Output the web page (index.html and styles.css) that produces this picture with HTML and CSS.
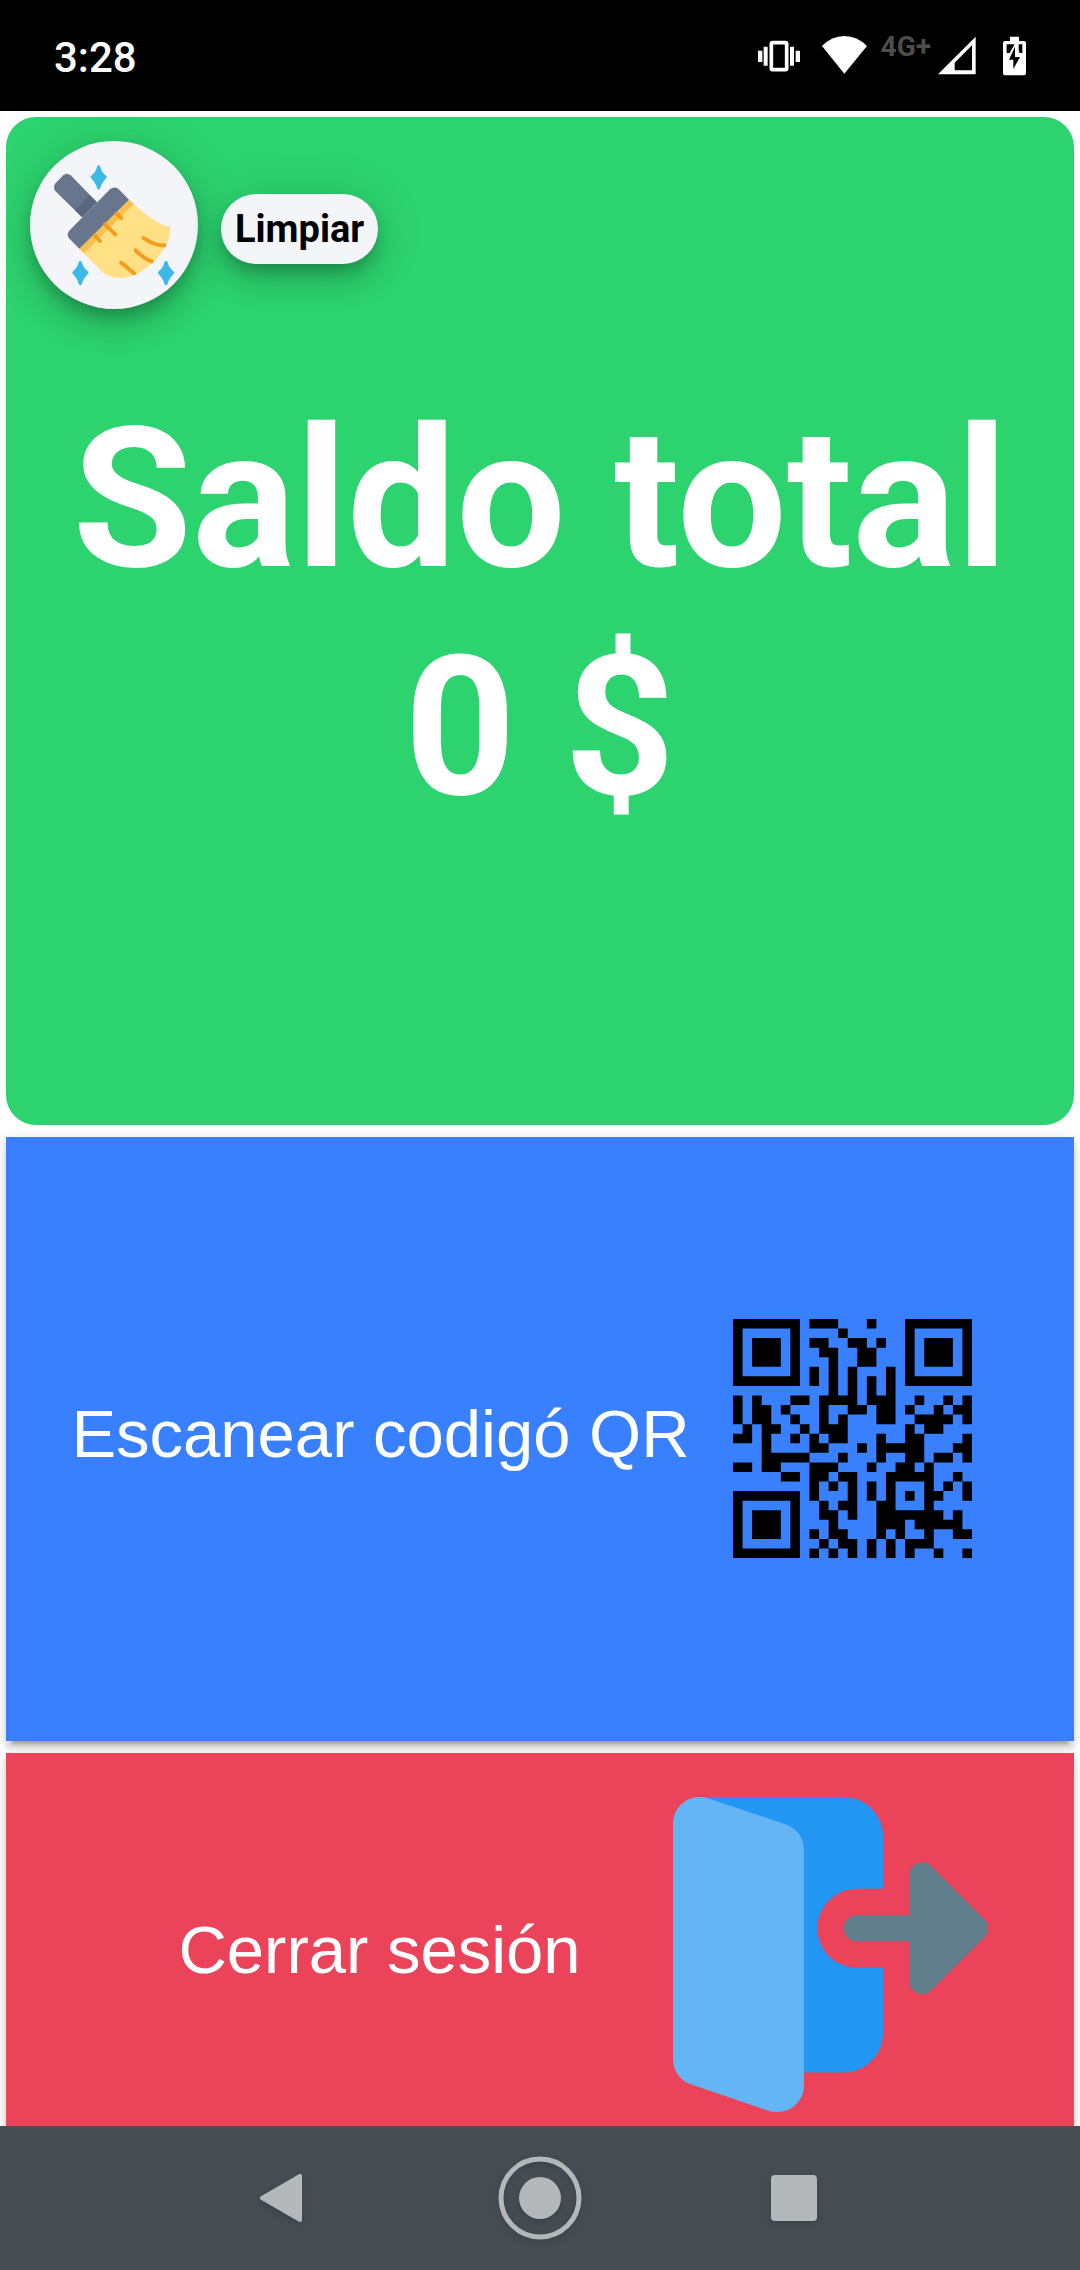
FILE: index.html
```html
<!DOCTYPE html>
<html lang="es">
<head>
<meta charset="utf-8">
<meta name="viewport" content="width=device-width, initial-scale=1">
<title>Saldo total</title>
<link rel="stylesheet" href="styles.css">
</head>
<body>
<header class="status">
  <time class="status-time">3:28</time>
  <div class="status-icons">
    <svg class="icon-vibrate" viewBox="53 106 126 120" aria-hidden="true">
      <path fill="#fff" d="M53 150h13v34H53zM70 138h12v57H70zM149 138h12v57h-12zM166 150h13v34h-13z"/>
      <rect x="93" y="126" width="46" height="81" rx="4" fill="none" stroke="#fff" stroke-width="11"/>
    </svg>
    <svg class="icon-wifi" viewBox="246 106 135 120" aria-hidden="true">
      <path fill="#fff" d="M246 136Q275 106 313 106T381 136L313 219Z"/>
    </svg>
    <span class="network">4G+</span>
    <svg class="icon-signal" viewBox="594 106 114 120" aria-hidden="true">
      <path fill="#fff" fill-rule="evenodd" d="M594 221L707 108V221ZM644 186V209H696V134Z"/>
    </svg>
    <svg class="icon-battery" viewBox="789 106 69 120" aria-hidden="true">
      <path fill="#fff" d="M810 108h27v13h15q6 0 6 6v91q0 6-6 6h-57q-6 0-6-6v-91q0-6 6-6h15z"/>
      <path fill="#000" d="M800 131h24L809 157H800zM836 131h11v26h-8l-3-8zM825 138V169H840L820 205V177H807Z"/>
    </svg>
  </div>
</header>

<main class="content">
  <section class="card">
    <div class="tools">
      <button class="fab" type="button" aria-labelledby="clean-label">
        <svg class="fab-icon" viewBox="90 423 504 504" aria-hidden="true">
          <path fill="#68768d" d="M165 551L190 526Q201 517 212 526L291 607L246 652L165 572Q159 561 165 551Z"/>
          <path fill="#596680" d="M268 585L291 607L246 652L225 630Z"/>
          <path fill="#ffe085" d="M387 599Q455 662 490 675Q503 679 510 679Q516 732 462 783Q420 826 375 833Q334 837 308 817L238 746Z"/>
          <path fill="#f8c14f" d="M387 599L401 612L253 760L238 746Z"/>
          <path fill="#68768d" d="M330 568Q345 556 358 569L387 599L238 746L207 715Q199 704 207 693Z"/>
          <g fill="none" stroke="#f59c1f" stroke-width="12" stroke-linecap="round">
            <path d="M350 641L364 654M315 673L346 703M284 706L300 723M364 788L402 820M407 751Q434 778 455 784M431 714Q464 738 493 736"/>
          </g>
          <path id="spark" fill="#3db9e8" d="M291 500Q296 490 301 500Q304 516 319 528Q322 531 319 534Q304 550 301 564Q296 574 291 564Q288 550 273 534Q270 531 273 528Q288 516 291 500Z"/>
          <use href="#spark" x="-55" y="287"/>
          <use href="#spark" x="202" y="287"/>
        </svg>
      </button>
      <span class="chip" id="clean-label">Limpiar</span>
    </div>
    <h1 class="total">Saldo total<br>0 $</h1>
  </section>

  <button class="action action-scan" type="button">
    <span class="label">Escanear codigó QR</span>
    <svg class="qr" viewBox="0 0 25 25" aria-hidden="true">
      <path fill="none" stroke="#000" d="M0 .5h7m1 0h3m3 0h1m3 0h7
        M0 1.5h1m5 0h1m4 0h1m6 0h1m5 0h1
        M0 2.5h1m1 0h3m1 0h1m1 0h2m2 0h2m1 0h1m2 0h1m1 0h3m1 0h1
        M0 3.5h1m1 0h3m1 0h1m2 0h2m2 0h2m3 0h1m1 0h3m1 0h1
        M0 4.5h1m1 0h3m1 0h1m3 0h1m2 0h2m3 0h1m1 0h3m1 0h1
        M0 5.5h1m5 0h1m1 0h1m1 0h1m1 0h1m3 0h1m1 0h1m5 0h1
        M0 6.5h7m1 0h1m1 0h1m1 0h1m1 0h1m1 0h1m1 0h7
        M10 7.5h1m1 0h1m1 0h1m1 0h1
        M0 8.5h1m1 0h1m3 0h2m1 0h4m1 0h3m2 0h1m2 0h1m1 0h1
        M0 9.5h1m1 0h2m1 0h1m3 0h1m2 0h2m1 0h2m1 0h1m2 0h1m1 0h2
        M0 10.5h1m1 0h2m2 0h1m2 0h1m1 0h1m3 0h2m2 0h4m1 0h1
        M1 11.5h1m1 0h2m2 0h1m1 0h3m6 0h1m1 0h2
        M0 12.5h2m1 0h1m2 0h1m1 0h1m1 0h2m3 0h1m2 0h2m4 0h1
        M3 13.5h1m4 0h2m3 0h1m1 0h5m3 0h2
        M3 14.5h5m3 0h1m3 0h1m2 0h2m1 0h2m1 0h1
        M0 15.5h2m1 0h2m3 0h3m3 0h1m2 0h2m1 0h1
        M5 16.5h2m1 0h2m1 0h2m3 0h5m2 0h1
        M8 17.5h1m1 0h1m1 0h1m1 0h1m1 0h1m3 0h1m1 0h1m1 0h1
        M0 18.5h7m1 0h1m3 0h1m1 0h1m1 0h1m1 0h1m1 0h2m2 0h1
        M0 19.5h1m5 0h1m2 0h1m1 0h2m2 0h2m3 0h1
        M0 20.5h1m1 0h3m1 0h1m2 0h2m1 0h1m2 0h7m1 0h1
        M0 21.5h1m1 0h3m1 0h1m3 0h1m4 0h3m1 0h5
        M0 22.5h1m1 0h3m1 0h1m1 0h1m1 0h2m3 0h1m1 0h1m2 0h1m2 0h2
        M0 23.5h1m5 0h1m2 0h1m1 0h2m1 0h1m1 0h1m1 0h3
        M0 24.5h7m1 0h1m1 0h1m1 0h1m1 0h1m1 0h1m1 0h1m2 0h1m2 0h1"/>
    </svg>
  </button>

  <button class="action action-logout" type="button">
    <span class="label">Cerrar sesión</span>
    <svg class="door" viewBox="101 205 943 943" aria-hidden="true">
      <path fill="#2196f3" d="M180 205H612A118 118 0 0 1 730 323V480H651A118 118 0 0 0 651 716H730V912A118 118 0 0 1 612 1030H480V400Z"/>
      <path fill="#64b5f6" d="M101 284A79 79 0 0 1 180 205Q194 205 205 209L440 287A79 79 0 0 1 493 361V1069A79 79 0 0 1 414 1148Q400 1148 387 1144L154 1065A79 79 0 0 1 101 991Z"/>
      <path fill="#607d8b" d="M651 559H808V441A39 39 0 0 1 875 413L1032 570A39 39 0 0 1 1032 626L875 783A39 39 0 0 1 808 755V637H651A39 39 0 0 1 651 559Z"/>
    </svg>
  </button>
</main>

<nav class="navbar" aria-label="Sistema">
  <button class="nav-button" type="button" aria-label="Atrás">
    <svg class="nav-icon" viewBox="0 0 84 84" aria-hidden="true"><path fill="#b4b8b9" stroke="#b4b8b9" stroke-width="4" stroke-linejoin="round" d="M57 20V64L19 42Z"/></svg>
  </button>
  <button class="nav-button" type="button" aria-label="Inicio">
    <svg class="nav-icon" viewBox="0 0 84 84" aria-hidden="true"><circle cx="42" cy="42" r="39" fill="none" stroke="#b4b8b9" stroke-width="5"/><circle cx="42" cy="42" r="21" fill="#b4b8b9"/></svg>
  </button>
  <button class="nav-button" type="button" aria-label="Recientes">
    <svg class="nav-icon" viewBox="0 0 84 84" aria-hidden="true"><rect x="18" y="19" width="46" height="46" rx="4" fill="#b4b8b9"/></svg>
  </button>
</nav>
</body>
</html>
```
FILE: styles.css
```css
* {
  box-sizing: border-box;
}

body {
  margin: 0;
  height: 100vh;
  display: flex;
  flex-direction: column;
  background: #fff;
  font-family: Roboto, sans-serif;
}

button {
  border: 0;
  padding: 0;
  font: inherit;
  cursor: pointer;
}

svg {
  display: block;
  flex: none;
}

/* System status bar */
.status {
  position: relative;
  z-index: 1;
  flex: none;
  height: 111px;
  padding: 0 54px;
  display: flex;
  align-items: center;
  justify-content: space-between;
  background: #000;
  color: #fff;
}

.status-time {
  padding-top: 5px;
  font-size: 42px;
  font-weight: 500;
  line-height: 48px;
}

.status-icons {
  display: flex;
  align-items: flex-start;
}

.status-icons svg {
  height: 40px;
}

.icon-vibrate {
  width: 42px;
  margin-right: 22px;
}

.icon-wifi {
  width: 45px;
  margin-right: 14px;
}

.network {
  margin-right: 7px;
  color: #4d4d4d;
  font-size: 28px;
  font-weight: 700;
  line-height: 22px;
}

.icon-signal {
  width: 38px;
  margin-right: 27px;
}

.icon-battery {
  width: 23px;
}

/* Scrolling page */
.content {
  flex: 1;
  min-height: 0;
  padding: 6px;
  display: flex;
  flex-direction: column;
  gap: 12px;
  overflow-y: auto;
  scrollbar-width: none;
}

.card {
  flex: none;
  height: calc(50% + 6px);
  padding: 24px;
  border-radius: 30px;
  background: #2dd36f;
}

.tools {
  display: flex;
  align-items: center;
  gap: 23px;
}

.fab {
  width: 168px;
  height: 168px;
  border-radius: 50%;
}

.fab,
.chip {
  background: #f4f5f8;
  box-shadow:
    0 9px 15px -3px rgba(0, 0, 0, .2),
    0 18px 30px rgba(0, 0, 0, .14),
    0 3px 54px rgba(0, 0, 0, .12);
}

.fab-icon {
  width: 168px;
  height: 168px;
}

.chip {
  height: 70px;
  margin-top: 8px;
  padding: 0 14px;
  border-radius: 35px;
  color: #000;
  font-size: 38px;
  font-weight: 700;
  line-height: 70px;
}

.total {
  margin: 77px 0 0;
  color: #fff;
  font-size: 194px;
  font-weight: 700;
  line-height: 228px;
  text-align: center;
  white-space: nowrap;
}

.action {
  flex: none;
  display: flex;
  align-items: center;
  color: #fff;
  font-family: "Liberation Sans", Arial, sans-serif;
  font-size: 67px;
  box-shadow:
    0 9px 3px -6px rgba(0, 0, 0, .2),
    0 6px 6px rgba(0, 0, 0, .14),
    0 3px 15px rgba(0, 0, 0, .12);
}

.label {
  flex: 1;
  padding-bottom: 10px;
  text-align: center;
  white-space: nowrap;
}

.action-scan {
  height: calc(30% + 4px);
  padding: 0 102px 0 22px;
  background: #3880ff;
}

.action-logout {
  height: calc(20% + 2px);
  padding: 0 86px 0 80px;
  background: #eb445a;
}

.qr {
  width: 239px;
  height: 239px;
}

.door {
  width: 315px;
  height: 315px;
}

/* System navigation bar */
.navbar {
  position: relative;
  z-index: 1;
  flex: none;
  height: 144px;
  display: flex;
  align-items: center;
  justify-content: center;
  gap: 171px;
  background: #454d53;
}

.nav-button {
  background: none;
}

.nav-icon {
  width: 84px;
  height: 84px;
  filter: drop-shadow(0 3px 3px rgba(0, 0, 0, .15));
}
```
